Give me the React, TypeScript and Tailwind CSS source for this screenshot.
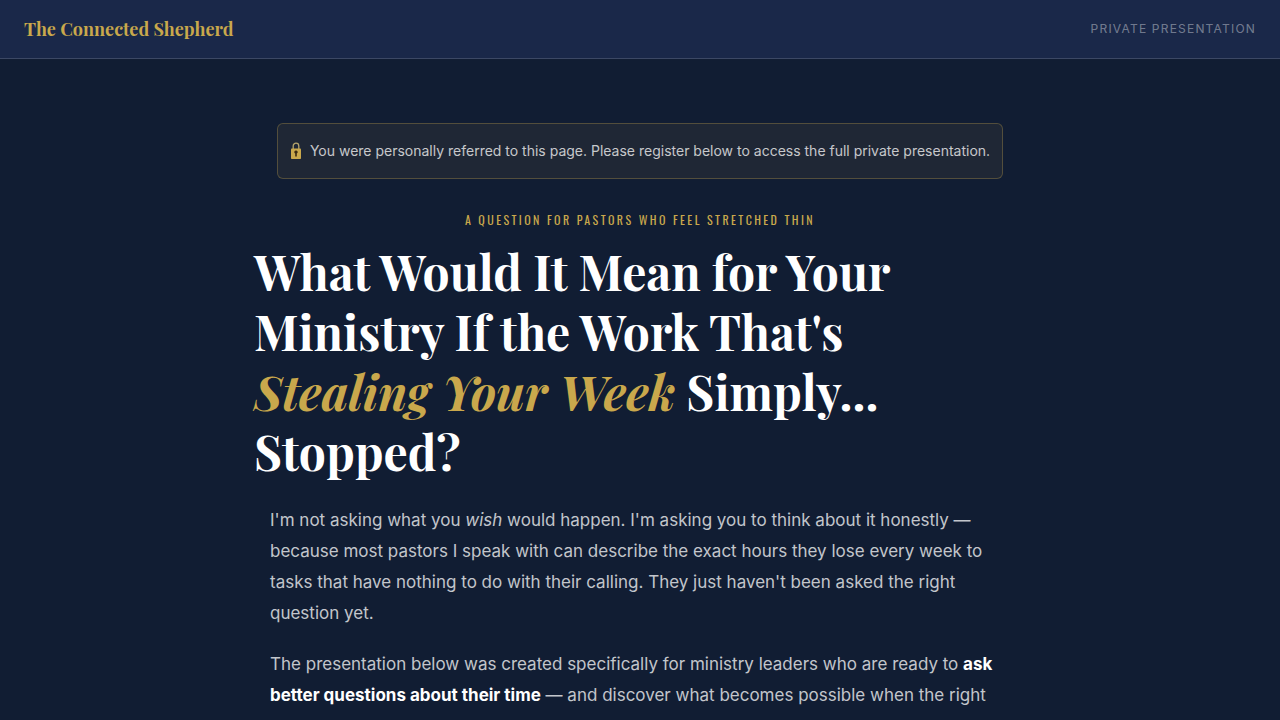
import type { ReactNode } from 'react';

/**
 * Landing page for privately referred visitors
 */

function SiteHeader() {
  return (
    <header className="flex h-[59px] items-center justify-between border-b border-white/15 bg-[#1a2849] px-6">
      <a href="#top" className="font-['Playfair_Display','Liberation_Serif',serif] text-[18px] font-bold text-[#c9a84c]">
        The Connected Shepherd
      </a>
      <span className="text-[12px] uppercase tracking-widest text-white/40">Private Presentation</span>
    </header>
  );
}

function LockIcon() {
  return (
    <svg viewBox="0 0 12 18" className="h-[18px] w-3 shrink-0" aria-hidden="true">
      <path d="M3.200 8V4a2.800 2.800 0 0 1 5.600 0V8" fill="none" stroke="#b5a56c" strokeWidth="1.300" />
      <rect x="1" y="6.500" width="10" height="10.500" rx="0.800" fill="#c9a84c" />
      <path d="M4.300 10.200a1.700 1.700 0 1 1 2.500 1.400V14.500H5.200V11.600a1.700 1.700 0 0 1-.9-1.400z" fill="#3b2a12" />
    </svg>
  );
}

function Paragraph({ children }: { children: ReactNode }) {
  return <p className="text-[17px] leading-[31px] text-white/75">{children}</p>;
}

export default function App() {
  return (
    <div id="top" className="min-h-screen bg-[#111d33] font-['Inter','Liberation_Sans',sans-serif]">
      <SiteHeader />

      <main className="mx-auto flex w-full max-w-[820px] flex-col items-center px-6 pt-16">
        {/* Referral notice */}
        <div className="flex items-center gap-2 rounded-md border border-[#c9a84c]/30 bg-[#c9a84c]/8 px-3 py-4 text-[14px] leading-[22px] text-white/75">
          <LockIcon />
          <p>You were personally referred to this page. Please register below to access the full private presentation.</p>
        </div>

        <p className="mt-8 font-['Oswald','Liberation_Sans_Narrow',sans-serif] text-[12px] leading-[18px] uppercase tracking-[0.2em] text-[#c9a84c]">
          A question for pastors who feel stretched thin
        </p>

        <h1 className="mt-3 w-full font-['Playfair_Display','Liberation_Serif',serif] text-[48px] leading-[60px] font-bold text-white">
          What Would It Mean for Your Ministry If the Work That's{' '}
          <em className="text-[#c9a84c]">Stealing Your Week</em> Simply... Stopped?
        </h1>

        <div className="mt-6 flex w-full max-w-[740px] flex-col gap-5">
          <Paragraph>
            I'm not asking what you <em>wish</em> would happen. I'm asking you to think about it honestly — because most
            pastors I speak with can describe the exact hours they lose every week to tasks that have nothing to do with
            their calling. They just haven't been asked the right question yet.
          </Paragraph>
          <Paragraph>
            The presentation below was created specifically for ministry leaders who are ready to{' '}
            <strong className="font-bold text-white">ask better questions about their time</strong> — and discover what
            becomes possible when the right
          </Paragraph>
        </div>
      </main>
    </div>
  );
}
